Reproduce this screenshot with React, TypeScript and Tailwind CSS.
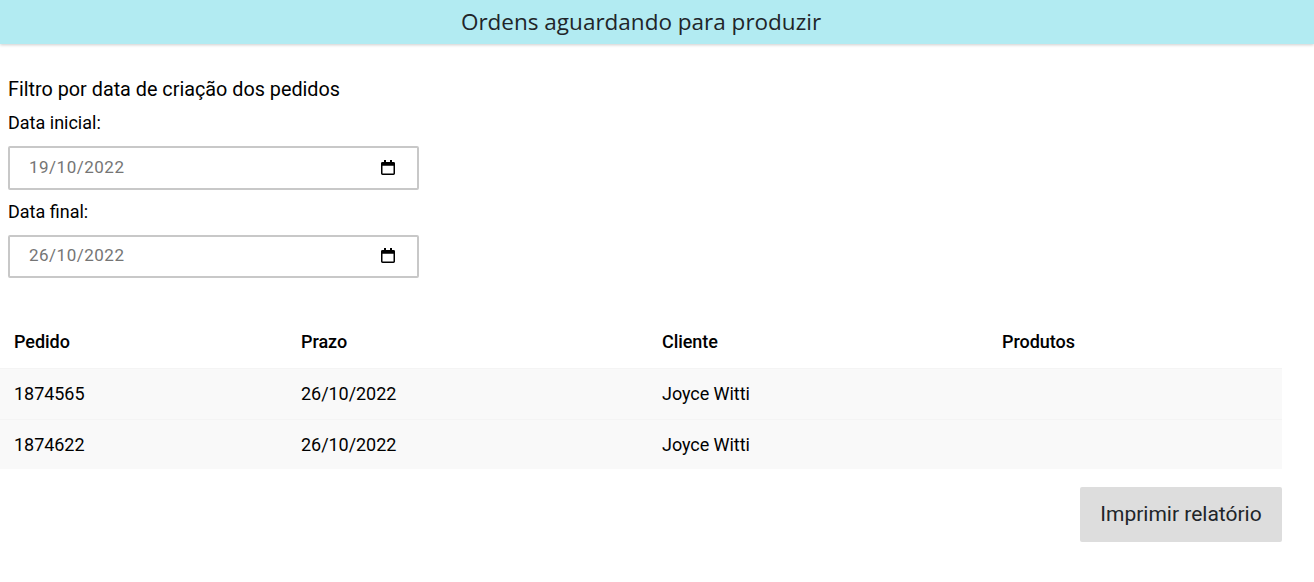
import React from 'react';

const CalendarIcon: React.FC = () => (
    <svg width="14" height="15" viewBox="0 0 14 16" preserveAspectRatio="none" className="mb-[1px] shrink-0 text-black">
        <path d="M3 0h2v2h4V0h2v2h1.5A1.5 1.5 0 0 1 14 3.5v11a1.5 1.5 0 0 1-1.5 1.5h-11A1.5 1.5 0 0 1 0 14.5v-11A1.5 1.5 0 0 1 1.5 2H3V0zM1.5 6v8.5h11V6h-11z" fill="currentColor" />
    </svg>
);

const DateField: React.FC<{ value: string; height: string }> = ({ value, height }) => (
    <div className={`flex w-[411px] items-center justify-between rounded-[2px] border-2 border-[#c8c8c8] pl-[19px] pr-[22px] ${height}`}>
        <span className="text-[17px] tracking-[0.5px] text-[#757575]">{value}</span>
        <CalendarIcon />
    </div>
);

const rows = [
    { pedido: '1874565', prazo: '26/10/2022', cliente: 'Joyce Witti' },
    { pedido: '1874622', prazo: '26/10/2022', cliente: 'Joyce Witti' },
];

export default function App() {
    return (
        <div className="min-h-[582px] bg-white font-['Roboto',sans-serif] text-black">
            <header className="flex h-[44px] items-center justify-center bg-[#b2ebf2] pr-[32px] shadow-[0_1px_3px_rgba(0,0,0,0.2)]">
                <h1 className="font-['Open_Sans',sans-serif] text-[22.5px] font-normal text-[#212529]">Ordens aguardando para produzir</h1>
            </header>

            <section className="pl-2 pt-[32px]">
                <h2 className="text-[19.8px] leading-[28px] font-normal">Filtro por data de criação dos pedidos</h2>
                <label className="mt-[7px] block text-[18px] leading-[24px]">Data inicial:</label>
                <div className="mt-[11px]"><DateField value="19/10/2022" height="h-[44px]" /></div>
                <label className="mt-[10px] block text-[18px] leading-[24px]">Data final:</label>
                <div className="mt-[11px]"><DateField value="26/10/2022" height="h-[43px] pb-[1px]" /></div>
            </section>

            <table className="mt-[38px] w-[1282px] table-fixed border-collapse text-[18px] tracking-[-0.05px]">
                <colgroup>
                    <col className="w-[287px]" />
                    <col className="w-[361px]" />
                    <col className="w-[340px]" />
                    <col />
                </colgroup>
                <thead>
                    <tr className="h-[52px] border-b border-[#f4f4f4]">
                        <th className="pl-[14px] text-left font-medium">Pedido</th>
                        <th className="pl-[14px] text-left font-medium">Prazo</th>
                        <th className="pl-[14px] text-left font-medium">Cliente</th>
                        <th className="pl-[14px] text-left font-medium">Produtos</th>
                    </tr>
                </thead>
                <tbody>
                    {rows.map((row) => (
                        <tr key={row.pedido} className="h-[51px] border-b border-[#f4f4f4] bg-[#f9f9f9] last:h-[50px] last:border-b-0">
                            <td className="pl-[14px]">{row.pedido}</td>
                            <td className="pl-[14px]">{row.prazo}</td>
                            <td className="pl-[14px]">{row.cliente}</td>
                            <td className="pl-[14px]"></td>
                        </tr>
                    ))}
                </tbody>
            </table>

            <div className="mt-[18px] flex w-[1282px] justify-end">
                <button className="h-[55px] w-[202px] rounded-[2px] bg-[#dddddd] pt-[1px] text-[21px] text-[#212529]">Imprimir relatório</button>
            </div>
        </div>
    );
}
